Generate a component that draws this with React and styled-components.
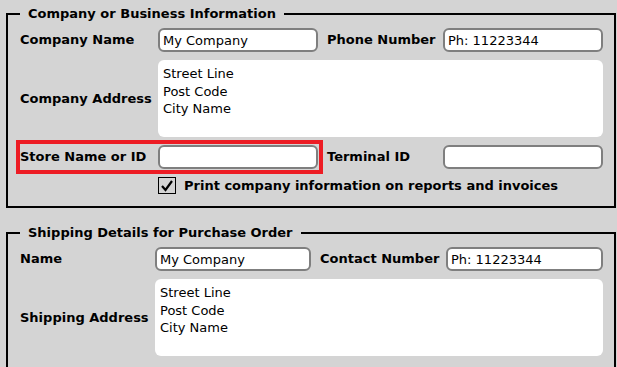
import React from "react";
import styled, { createGlobalStyle } from "styled-components";

const Global = createGlobalStyle`
  html, body { margin: 0; padding: 0; background: #d4d4d4; }
  body { font-family: "DejaVu Sans", Verdana, sans-serif; font-size: 13px; color: #000; }
  * { box-sizing: border-box; }
`;

const Page = styled.div`
  display: flex;
  flex-direction: column;
  gap: 17px;
  padding: 6px 1px 0 6px;
  width: 617px;
  height: 367px;
  overflow: hidden;
`;

const Group = styled.fieldset`
  margin: 0;
  border: 2px solid #000;
  padding: 6px 11px ${(p) => p.$bottom}px 12px;
  min-width: 0;
`;

const Legend = styled.legend`
  padding: 0 8px;
  font-weight: bold;
  font-size: 13px;
  line-height: 16px;
`;

const Grid = styled.div`
  display: grid;
  grid-template-columns: ${(p) => p.$cols};
  row-gap: 8px;
  align-items: center;
`;

const Label = styled.label`
  font-weight: bold;
  font-size: 13px;
  line-height: 16px;
  white-space: nowrap;
  padding-left: ${(p) => (p.$inset ? "9px" : "0")};
`;

const Field = styled.input`
  height: 24px;
  width: 100%;
  margin: 0;
  border: 2px solid #7f7f7f;
  border-radius: 6px;
  background: #fff;
  padding: 0 3px;
  font-family: "DejaVu Sans", Verdana, sans-serif;
  font-size: 13px;
  color: #000;
  outline: none;
`;

const Area = styled.textarea`
  grid-column: 2 / 5;
  height: 77px;
  width: 100%;
  margin: 0;
  border: none;
  border-radius: 6px;
  background: #fff;
  padding: 5px 5px;
  font-family: "DejaVu Sans", Verdana, sans-serif;
  font-size: 13px;
  line-height: 17.5px;
  color: #000;
  resize: none;
  overflow: hidden;
  outline: none;
`;

const Highlight = styled.div`
  grid-column: 1 / 3;
  display: grid;
  grid-template-columns: ${(p) => p.$cols};
  align-items: center;
  position: relative;
  &::after {
    content: "";
    position: absolute;
    top: -5px;
    bottom: -5px;
    left: -4px;
    right: -5px;
    border: 4px solid #ed1c24;
    pointer-events: none;
  }
`;

const CheckRow = styled.div`
  grid-column: 2 / 5;
  display: flex;
  align-items: center;
  gap: 8px;
  height: 17px;
`;

const Box = styled.span`
  width: 18px;
  height: 17px;
  border: 1px solid #000;
  display: inline-flex;
  align-items: center;
  justify-content: center;
  background: #d4d4d4;
`;

const CheckLabel = styled.span`
  font-weight: bold;
  font-size: 13px;
  line-height: 16px;
  white-space: nowrap;
`;

const address = "Street Line\nPost Code\nCity Name";

export default function App() {
  const cols1 = "138px 160px 125px 160px";
  const cols2 = "135px 156px 135px 157px";
  return (
    <>
      <Global />
      <Page>
        <Group $bottom={12}>
          <Legend>Company or Business Information</Legend>
          <Grid $cols={cols1}>
            <Label>Company Name</Label>
            <Field readOnly value="My Company" />
            <Label $inset>Phone Number</Label>
            <Field readOnly value="Ph: 11223344" />

            <Label>Company Address</Label>
            <Area readOnly value={address} />

            <Highlight $cols="138px 160px">
              <Label>Store Name or ID</Label>
              <Field readOnly value="" />
            </Highlight>
            <Label $inset>Terminal ID</Label>
            <Field readOnly value="" />

            <CheckRow>
              <Box>
                <svg width="14" height="14" viewBox="0 0 14 14">
                  <path d="M2 7 L5.5 11 L12 2" fill="none" stroke="#000" strokeWidth="2.2" />
                </svg>
              </Box>
              <CheckLabel>Print company information on reports and invoices</CheckLabel>
            </CheckRow>
          </Grid>
        </Group>

        <Group $bottom={20}>
          <Legend>Shipping Details for Purchase Order</Legend>
          <Grid $cols={cols2}>
            <Label>Name</Label>
            <Field readOnly value="My Company" />
            <Label $inset>Contact Number</Label>
            <Field readOnly value="Ph: 11223344" />

            <Label>Shipping Address</Label>
            <Area readOnly value={address} />
          </Grid>
        </Group>
      </Page>
    </>
  );
}
